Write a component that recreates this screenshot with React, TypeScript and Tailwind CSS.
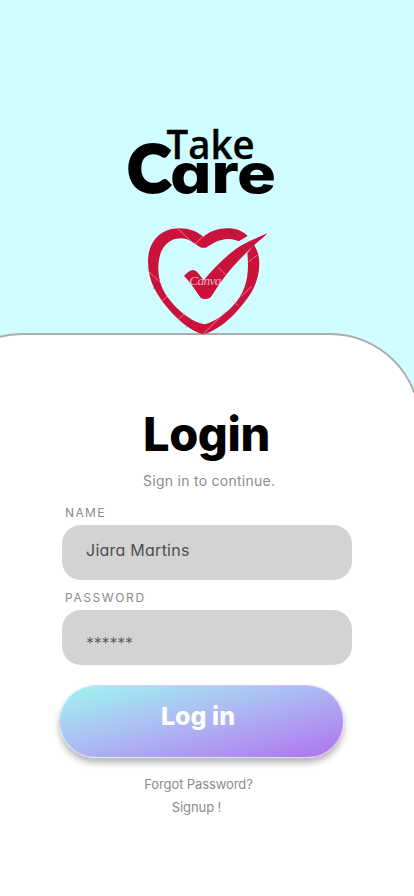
import React from "react";

const poppinsLike = "font-['Inter','Liberation_Sans',sans-serif] [font-feature-settings:'cv11'] whitespace-nowrap";

function Wordmark() {
  return (
    <svg className="mt-[120px] block overflow-visible" width="160" height="80" viewBox="0 0 160 80" role="img" aria-label="Take Care">
      <text x="46.5" y="38.5" fontFamily="Open Sans, sans-serif" fontWeight="600" fontSize="40" stroke="#000" strokeWidth="0.3" textLength="88" lengthAdjust="spacingAndGlyphs">Take</text>
      <text x="7.5" y="72" fontFamily="Lato, sans-serif" fontWeight="900" fontSize="65" stroke="#000" strokeWidth="3" textLength="43" lengthAdjust="spacingAndGlyphs">C</text>
      <text x="50" y="73" fontFamily="Inter, sans-serif" fontWeight="800" style={{ fontFeatureSettings: "'cv11'" }} fontSize="55" textLength="106" lengthAdjust="spacingAndGlyphs">are</text>
    </svg>
  );
}

function HeartCheck() {
  return (
    <svg className="relative z-10 mt-5 block" width="135" height="115" viewBox="0 0 405 345">
      <g fill="#cb123b">
        <path d="M190 50C170 34 148 25 118 25C62 25 24 65 24 125C24 185 52 228 90 272C118 304 156 334 190 343C224 334 262 306 292 272C335 226 358 184 358 130C358 108 352 90 342 74L322 100C329 166 318 217 278 258C251 287 222 305 194 313C159 306 128 283 101 254C70 220 55 188 55 145C55 92 78 56 122 55C150 55 166 75 184 83H198C215 72 240 55 268 57C281 58 289 61 296 64L323 48C307 32 288 25 263 25C233 25 211 34 190 50Z" />
        <path d="M132 168C141 158 150 151 160 150C172 151 181 170 191 181C228 137 272 92 316 70C342 57 364 48 382 40C373 52 354 64 342 76C322 96 294 121 268 153C244 181 228 209 212 232C204 238 190 238 182 233C164 210 155 190 132 168Z" />
      </g>
      <g stroke="#f4a9ba" strokeWidth="2" fill="none">
        <path d="M112 25L158 68M164 72L188 50M24 153L66 192M64 246L88 221M112 302L137 278M190 342L258 274M235 143L257 164M303 230L334 199M273 236L294 257M326 126L352 105" />
      </g>
      <g stroke="#8d1233" strokeWidth="1.5" fill="none">
        <path d="M60 177L40 207M158 300L139 322M263 26L296 58M323 98L354 130M202 206L220 190" />
      </g>
      <text x="148" y="196" fill="#f3dce2" fillOpacity=".8" fontFamily="Liberation Serif, serif" fontStyle="italic" fontSize="40" textLength="96">Canva</text>
    </svg>
  );
}

function Field({ label, children, tracking, pad }: { label: string; children: React.ReactNode; tracking: string; pad: string }) {
  return (
    <div className="w-[290px]">
      <div className={`${poppinsLike} ml-[3px] h-[18px] text-[12px] leading-[19px] text-[#8b8b8b] ${tracking}`}>{label}</div>
      <div className={`mt-1 flex h-[55px] items-center rounded-[19px] bg-[#d3d3d3] pl-6 ${pad}`}>{children}</div>
    </div>
  );
}

export default function App() {
  return (
    <main className="flex h-[896px] w-[414px] flex-col overflow-hidden bg-[#d0fdff]">
      <header className="flex h-[333px] shrink-0 flex-col">
        <div className="ml-[120px]"><Wordmark /></div>
        <div className="ml-[140px]"><HeartCheck /></div>
      </header>
      <section className="-ml-[69px] h-[700px] w-[490px] shrink-0 rounded-[91px] border-2 border-[#acacac] bg-white">
        <div className="ml-[67px] w-[414px]">
          <h1 className={`${poppinsLike} ml-[143px] mt-[69px] h-[60px] text-[47px] font-extrabold leading-[60px] tracking-[-0.4px] text-black`}>Login</h1>
          <p className={`${poppinsLike} ml-[143px] mt-[7px] h-5 text-[14px] leading-5 tracking-[0.27px] text-[#8b8b8b]`}>Sign in to continue.</p>
          <div className="ml-[62px] mt-[11.5px] flex flex-col gap-2">
            <Field label="NAME" tracking="tracking-[1.4px]" pad="pb-[4px]">
              <span className={`${poppinsLike} text-[16px] leading-6 tracking-[0.25px] text-[#4f4f4f]`}>Jiara Martins</span>
            </Field>
            <Field label="PASSWORD" tracking="tracking-[1.6px]" pad="pt-[11px]">
              <span className={`${poppinsLike} text-[16px] font-light leading-6 tracking-[-0.2px] text-[#4f4f4f]`}>******</span>
            </Field>
          </div>
          <button className={`${poppinsLike} ml-[58.5px] mt-[20px] flex h-[73px] w-[285px] items-center justify-center rounded-full border border-[#ffffff80] bg-linear-to-br from-[#9df5f0] to-[#ae70ef] pb-[9px] pr-[6px] text-[25px] font-extrabold text-white shadow-[0_5px_6px_rgba(0,0,0,0.28)]`}>Log in</button>
          <nav className="ml-[98.5px] mt-[15.5px] flex w-[200px] flex-col items-center font-['Inter',sans-serif] text-[13px] leading-[23px] tracking-[-0.1px] text-[#8b8b8b]">
            <a>Forgot Password?</a>
            <a className="-ml-1">Signup !</a>
          </nav>
        </div>
      </section>
    </main>
  );
}
